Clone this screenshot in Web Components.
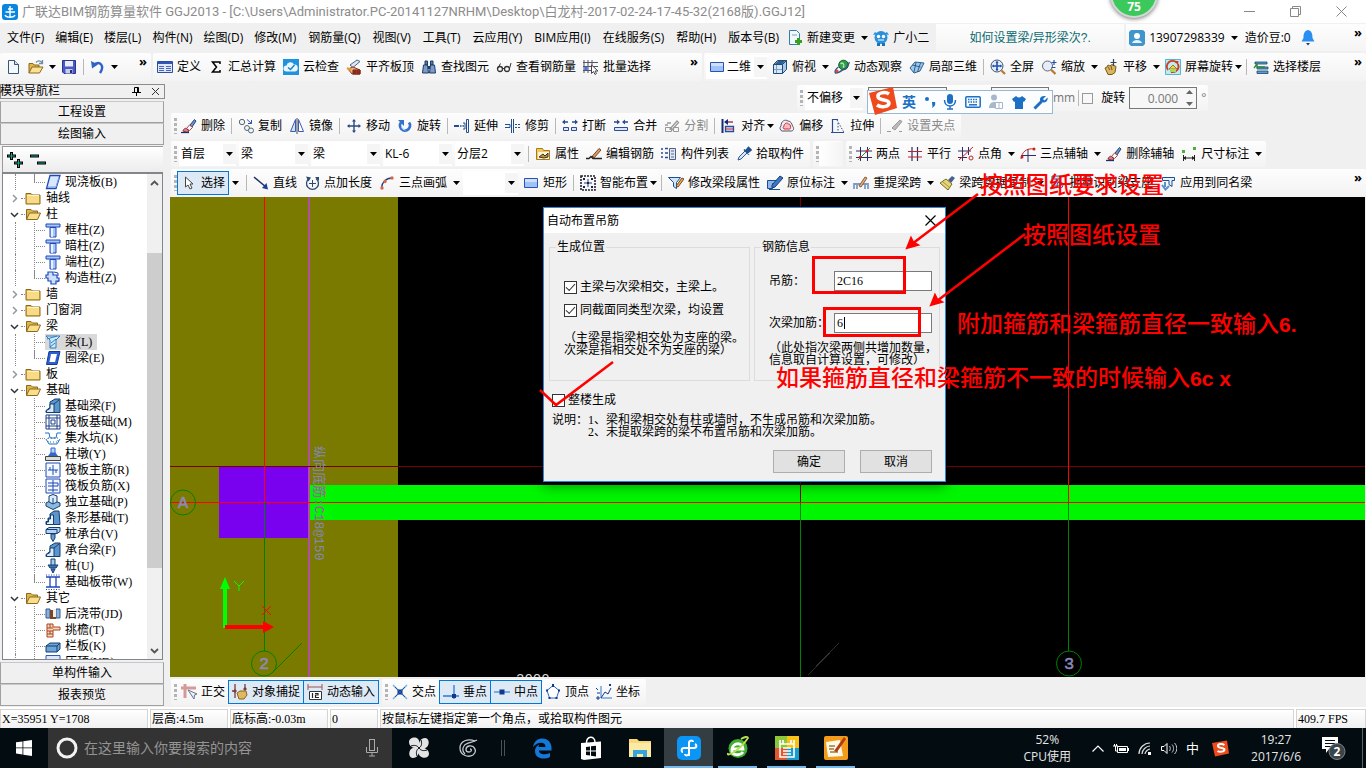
<!DOCTYPE html>
<html lang="zh-CN">
<head>
<meta charset="utf-8">
<title>广联达BIM钢筋算量软件 GGJ2013</title>
<style>
  body {
    margin: 0;
    background: #f0f0f0;
    color: #000;
    --ui: "Open Sans", "Noto Sans CJK SC", sans-serif;
    --song: "Liberation Serif", "Noto Sans CJK SC", serif;
    font: 12px/16px var(--ui);
  }
</style>
</head>
<body>
<ggj-app></ggj-app>
<script>
const svg = (body, size = 16) =>
  `<svg width="${size}" height="${size}" viewBox="0 0 16 16" fill="none" aria-hidden="true">${body}</svg>`;

const FOLDER = '<path d="M1 3.500h5l1.500 1.500h7.500v9h-14z" fill="#e9bd55" stroke="#8a6a1c"/><path d="M2 6h12v7H2z" fill="#f7db86"/><path d="M2 5.500h12" stroke="#fff3c4"/>';
const FOLDER_OPEN = '<path d="M1.500 13.500v-10h4.500l1.500 1.500h5v2" fill="#e2b44a" stroke="#8a6a1c"/><path d="M1.500 13.500l3-6.500h11l-3 6.500z" fill="#f9de8c" stroke="#8a6a1c"/>';
const ICONS = {
  file: '<path d="M3.500 1.500h6l4 4v9h-10z" fill="#f4f9ff" stroke="#3a5578"/><path d="M9.500 1.500v4h4" fill="#cfe0f2" stroke="#3a5578"/>',
  open: '<path d="M1 14V4.500h4l1 1.500h5v2" fill="#e2b44a" stroke="#8a6a1c"/><path d="M1 14l3-6h11l-3.500 6z" fill="#fbe194" stroke="#8a6a1c"/><path d="M8 3.500c2-2.500 5-2 6 .5M14.500 1v3.500h-3.500" stroke="#6b8fa8" stroke-width="1.300"/>',
  save: '<path d="M1.500 1.500h13v13H3l-1.500-1.500z" fill="#4a59c4" stroke="#2b3590"/><path d="M4 2h8v5.500H4z" fill="#e8ecfa"/><path d="M4.500 10h7v4.500h-7z" fill="#c9cfe8"/><path d="M9 11h2v3H9z" fill="#26307e"/>',
  undo: '<path d="M4 5.500c6-4 11 1 6 8.500" stroke="#2f62c8" stroke-width="2.400"/><path d="M1 2l1 7.500 6-4z" fill="#2f62c8"/>',
  define: '<path d="M.5 2.500h15v11H.5z" fill="#dfe8fb" stroke="#2d4f9e"/><path d="M1 3h14v2H1z" fill="#2f56b8"/><path d="M2 7.500h5M9 7.500h5M2 9.500h5M9 9.500h5M2 11.500h5M9 11.500h5" stroke="#4669b8"/>',
  sigma: '<path d="M12 5V3H4.500L8.500 8l-4 5H12v-2" stroke="#000" stroke-width="1.500"/>',
  cloud: '<path d="M0 0h16v16H0z" fill="#1f93de"/><path d="M3.500 12.500a3 3 0 010-6 4 4 0 017.500-1 3.500 3.500 0 01.5 7z" fill="#e9f6ff"/><path d="M5 8.500l2.500 2 4-4.500" stroke="#1580c8" stroke-width="1.400"/>',
  align: '<path d="M4 6l7-5 3 1.500-7 6z" fill="#dde7f2" stroke="#47648c"/><path d="M2 10l5-2 7 3v4H6z" fill="#e8b48a" stroke="#9c2f18"/><path d="M7 11h7v4H7zM9 11v4M12 11v4M7 13h7" fill="#c8502c" stroke="#702010"/><path d="M1 9l4 2" stroke="#e0a030" stroke-width="2"/>',
  find: '<path d="M4 2h2.500v4H4zM9.500 2H12v4H9.500z" fill="#587db0" stroke="#1d3b66"/><path d="M2.500 6h4l1 8h-6zM9.500 6h4l1 8h-6z" fill="#7c9cc8" stroke="#1d3b66"/><path d="M7 7h2v3H7z" fill="#1d3b66"/>',
  glasses: '<circle cx="4" cy="10" r="2.500" stroke="#333" stroke-width="1.300"/><circle cx="11" cy="10" r="2.500" stroke="#333" stroke-width="1.300"/><path d="M6.500 9.500h2M2 9l2.500-4.500M13.500 9.500L15 4" stroke="#333"/>',
  batch: '<path d="M1 1v13M5 1v13M9 1v13M0 3.500h15M0 7.500h15M0 11.500h9" stroke="#556"/><path d="M1.500 8h3v3h-3z" fill="#3d7be0"/><path d="M8.500 6v8.500l2-2 1.500 3 1.500-1-1.500-2.500h3z" fill="#fff" stroke="#445"/>',
  rect: '<path d="M1.500 3.500h13v9h-13z" fill="#9fc2fb" stroke="#2a52b0"/><path d="M2 4h12v3H2z" fill="#cfe0ff"/>',
  cube: '<path d="M1.500 5.500l4-4h9v9l-4 4h-9z" fill="#a7c9ea" stroke="#204a78"/><path d="M1.500 5.500h9v9M10.500 5.500l4-4" stroke="#204a78"/><path d="M2 6h8v8H2z" fill="#d5e8f8"/><path d="M4.500 6v8M2 10.500h8" stroke="#7aa0c4"/><path d="M3 5l3-3h7l-2.500 3z" fill="#2f6090"/>',
  orbit: '<circle cx="9.500" cy="6" r="4.800" fill="#2c9c4c" stroke="#14602c"/><path d="M6.500 5c2-2 4 0 3 2s2 2 3 0" stroke="#9fe6a0" stroke-width="1.500"/><path d="M15 3C16 6 6 14 1.500 14 0 12 3 9 4.500 8" stroke="#37577e" stroke-width="1.400"/><circle cx="3" cy="12" r="1.500" fill="#d44"/>',
  local3d: '<path d="M1 9l5-6 9 1-4 8-6 2z" fill="#9fc9e8" stroke="#2c5f90"/><path d="M3.500 6l8 2M7 3.500L5 13M11.500 4L8.500 13" stroke="#2c5f90"/>',
  full: '<circle cx="7" cy="7" r="6" fill="#e4eefa" stroke="#456"/><path d="M7 2.500v9M2.500 7h9" stroke="#2450b0" stroke-width="1.600"/><path d="M7 2l-1.500 2h3zM7 12l-1.500-2h3zM2 7l2-1.500v3zM12 7l-2-1.500v3z" fill="#2450b0"/><path d="M11.500 11.500l3.500 3.500" stroke="#b87828" stroke-width="2.200"/>',
  zoom: '<circle cx="6.500" cy="7" r="5" fill="#e4eefa" stroke="#667"/><path d="M13 1v5M10.500 3.500h5M10.500 8.500h4" stroke="#2450b0" stroke-width="1.200"/><path d="M10 10.500l4.500 4.500" stroke="#b87828" stroke-width="2.200"/>',
  pan: '<path d="M2 9l2-1 1-2 2 1 2-1.500 4 2-1 6-3 2H5z" fill="#dbb460" stroke="#7a5a18"/><path d="M10.500 0v7M7.500 3.500h6" stroke="#345" stroke-width="1.200"/><path d="M5 8l2 3M8 7l1 4" stroke="#7a5a18"/>',
  screenrot: '<path d="M.5.5h15v15H.5z" fill="#bfeaf2" stroke="#4fb8d8"/><path d="M3 11A5.500 5.500 0 0112 4M13 5c2 5-2 9-7 8" stroke="#d33a22" stroke-width="1.800"/><path d="M9.500 2l4 0-.5 4z" fill="#d33a22"/><path d="M4 10l4-4 4 4z" fill="#efd14e" stroke="#998020"/><path d="M5 10h6v3H5z" fill="#a6d66a"/>',
  floors: '<path d="M2 3h12v2H2zM4 8h11v2H4zM4 12h11v2.500H4z" fill="#5d9ec8" stroke="#14486e" stroke-width=".8"/><path d="M1 9l3-4v3h8" stroke="#2c8a3c" stroke-width="1.400"/>',
  brush: '<path d="M9 7l4.500-5.500 1.500 1.500-4 6z" fill="#6d92c8" stroke="#2c4678"/><path d="M5.500 10.500l3-3.500 3 2.500-3 3z" fill="#fff" stroke="#a44"/><path d="M2 13c1-3 3-3 3.500-2.500l2.500 2.500-2 1.500z" fill="#db7a88" stroke="#833"/><path d="M0 14.500h8" stroke="#1d2d70" stroke-width="1.300"/>',
  copy: '<circle cx="4" cy="4" r="2.700" fill="#f2f5f7" stroke="#567"/><circle cx="9" cy="10" r="2.500" fill="#f2f5f7" stroke="#567"/><circle cx="13" cy="12.500" r="2.500" fill="#f2f5f7" stroke="#567"/><path d="M9 1.500l4.500 4M13.500 2v3.500H10" stroke="#2b56b0"/>',
  mirror: '<path d="M6.500 1.500v12h-5z" stroke="#3c5ca8" fill="#cfe0fa"/><path d="M9.500 1.500v12h5z" stroke="#3c5ca8" fill="#fff"/><path d="M8 0v16" stroke="#446"/>',
  move: '<path d="M8 2v12M2 8h12" stroke="#2b4a80" stroke-width="1.400"/><path d="M8 1L6 3.500h4zM8 15l-2-2.500h4zM1 8l2.500-2v4zM15 8l-2.500-2v4z" fill="#2b4a80"/>',
  rotate: '<path d="M4 4.500a5 5 0 108 0" stroke="#3470cc" stroke-width="2.800"/><path d="M1 2h6v6z" fill="#3470cc"/><path d="M4.500 9a4 4 0 004 3" stroke="#b9d6ff"/>',
  extend: '<path d="M0 8h5" stroke="#204f90" stroke-width="2"/><path d="M6 8h5" stroke="#204f90" stroke-width="1.500" stroke-dasharray="1.500 1"/><path d="M9 5h2v6H9M12.500 1.500h2v13h-2z" stroke="#204f90"/>',
  trim: '<path d="M0 6.500h5v3H0" stroke="#204f90"/><path d="M6.500 1v14M8.500 1v14" stroke="#204f90"/><path d="M10 6.500h6M10 9.500h6" stroke="#204f90" stroke-dasharray="2 1"/>',
  break: '<path d="M1.500 9.500h5v3h-5zM9.500 9.500h5v3h-5z" fill="#dce6f8" stroke="#2d4a94"/><path d="M1 4h5M10 4h5" stroke="#2d4a94" stroke-width="1.300"/><path d="M0 4l3-2.500v5zM16 4l-3-2.500v5z" fill="#2d4a94"/>',
  join: '<path d="M1.500 9.500h13v3h-13z" fill="#dce6f8" stroke="#2d4a94"/><path d="M1 4h5M10 4h5" stroke="#2d4a94" stroke-width="1.300"/><path d="M7 4L4 1.500v5zM9 4l3-2.500v5z" fill="#2d4a94"/>',
  split: '<path d="M1.500 9.500h6v4h-6zM9.500 9.500h5v4h-5z" stroke="#999"/><path d="M6 11l7-8 1.500 1.500L8 12zM3 5h4M1 7h3" stroke="#999" stroke-width="1.300"/>',
  alignto: '<path d="M1.500 1v14" stroke="#142c70" stroke-width="2"/><path d="M4.500 8.500h8v5h-8z" fill="#dce6f8" stroke="#2d4a94" stroke-width="1.300"/><path d="M5 11h7" stroke="#c22"/><path d="M5 4h7" stroke="#a22a4a" stroke-width="1.400"/><path d="M3 4l4-3v6z" fill="#142c70"/>',
  offset: '<path d="M3 13a3 3 0 01-1-5C2 3 6 1 9 3c3 0 4 3 4.500 5 2 2 1 5-1 5z" stroke="#556" fill="#eef"/><path d="M5 11a2 2 0 010-3c0-2.500 3-4 4.500-2 2 0 2 2 2 3 .5 1 0 2-1 2z" stroke="#c33" fill="#fbb"/>',
  stretch: '<path d="M2.500 14.500v-13h5.500" stroke="#2d4a94" stroke-width="1.200"/><path d="M7 2l7 12.500" stroke="#2d4a94" stroke-dasharray="1.500 1.500"/><path d="M1 14.500h13" stroke="#2d4a94"/><path d="M8 5v9" stroke="#2d4a94" stroke-dasharray="1.500 1.500"/>',
  grip: '<path d="M0 13.500h4M12 13.500h3" stroke="#999"/><path d="M5 10l8-8 2 1.500L8 12z" fill="#bbb" stroke="#999"/>',
  prop: '<path d="M1.500 2.500h6l1 2h6v9h-13z" fill="#f2c661" stroke="#a87a1c"/><path d="M3 6h11v7H3z" fill="#fdf3d0"/><path d="M4 11l4-3 2 2 3-3v4l-4 1z" fill="#c8902c" stroke="#333"/>',
  editbar: '<path d="M0 12.500h3l2-2 2 2h9" stroke="#222" stroke-width="1.300"/><path d="M6 10.500l7-8 2 1.500-7 8z" fill="#d99c68" stroke="#7d4a24"/><path d="M5 12l1-2 2 1z" fill="#222"/>',
  list: '<path d="M0 3h2M0 7h2M0 11h2M4 2.500h3M4 7h3M4 11.500h3" stroke="#2d4a94" stroke-width="1.300"/><path d="M8.500 2.500h6v11h-6z" fill="#dfe7f4" stroke="#4a5f88"/><path d="M10 5h3M10 8h3M10 11h3" stroke="#667"/>',
  pick: '<path d="M2 14l1-3 6-6 2 2-6 6z" fill="#d8e8f8" stroke="#2f5a90"/><path d="M8 3.500l5 5M9.500 5l3-3.500 2.500 2.500-3.500 3z" fill="#23508e" stroke="#23508e" stroke-width="1.600"/>',
  twopt: '<path d="M4.500 1v14M11.500 1v14M0 5h16M0 11.500h16" stroke="#2b2f66"/><path d="M2 14L14 2" stroke="#2c8a2c"/><path d="M3 12l2-2M10 6l2-2" stroke="#c22" stroke-width="2"/>',
  parallel: '<path d="M5 1v14M10.500 1v14" stroke="#2b2f66" stroke-width="1.200"/><path d="M1 5.500h14M1 11h14" stroke="#b23"/>',
  ptangle: '<path d="M4.500 1v14M10.500 1v8M0 5h13M0 11.500h9" stroke="#2b2f66"/><path d="M1 14L15 1" stroke="#c22"/><circle cx="13" cy="12" r="2" stroke="#c22"/>',
  threept: '<path d="M8 3v13M1 9.500h15" stroke="#2b2f66"/><path d="M1 13C2 6 6 2 14 3" stroke="#c22"/><circle cx="14" cy="3" r="1.500" fill="#c22"/><circle cx="2" cy="11" r="1.500" fill="#c22"/>',
  dim: '<path d="M2.500 9v6M13.500 9v6M3 12h10" stroke="#222"/><path d="M2 12l3-2v4zM14 12l-3-2v4z" fill="#222"/><path d="M1 4h3v3H1zM12 1h3v3h-3z" fill="#4caf3c"/>',
  cursor: '<path d="M4.500 2v10l2.500-2 2 4 2-1-2-4h3z" fill="#fff" stroke="#444"/>',
  line: '<path d="M1 2l12 10" stroke="#1c2d66" stroke-width="1.500"/><path d="M15 14.500l-6-1.500 4.500-5z" fill="#1c3d96"/>',
  ptlen: '<path d="M5 3.500a6 6 0 107 0" stroke="#2b4a70" stroke-width="1.300"/><path d="M8.500 5v7M5 8.500h7" stroke="#2b4a70"/><path d="M2 1.500l5 1-2.500 4zM15 6l-4-4h4z" fill="#2b4a70"/>',
  arc: '<path d="M2.500 13C3 7 7 3 13 3" stroke="#24407e" stroke-width="1.300"/><circle cx="3" cy="13" r="1.700" fill="#d4684c"/><circle cx="6" cy="6.500" r="1.700" fill="#d4684c"/><circle cx="13" cy="3" r="1.700" fill="#d4684c"/>',
  smart: '<path d="M1 1h14v14H1z" stroke="#223" stroke-dasharray="2 1" stroke-width="1.600"/><path d="M8 4v8M4 8h8" stroke="#1c3d96"/><path d="M3 3h2v2H3zM11 3h2v2h-2zM3 11h2v2H3zM11 11h2v2h-2zM7 7h2v2H7z" fill="#223"/>',
  modify: '<path d="M.5 2.500h12l-4 5v6l-3-2v-4z" fill="#cfe6f8" stroke="#1d4f90"/><path d="M8 11l6-8 2 1-6 8z" fill="#e8a860" stroke="#7c4818"/>',
  insitu: '<path d="M.5 5.500h9v3h-4v5h-5z" fill="#8fb8e8" stroke="#1d4f90"/><path d="M5 10l8-9 3 2-8 9-3 1z" fill="#3d78c4" stroke="#173e78"/><path d="M2 14.500h11" stroke="#1d4f90"/>',
  respan: '<path d="M1 14v-5h3v5M12 14v-5h3v5M1 9h14" stroke="#7d9cc4" stroke-width="1.800"/><path d="M6 11l6-9 2 1-6 9z" fill="#e0b088" stroke="#8a5a34"/>',
  paint: '<path d="M9 5l4-4 3 2-4 5z" fill="#47608e"/><path d="M1 8l6-4 6 5-4 6z" fill="#e6d478" stroke="#7c6a20"/><path d="M4 7l6 5" stroke="#a89838"/>',
  identify: '<path d="M3 1h9v10H3z" fill="#cfe0f2" stroke="#335a90"/><path d="M5 4h5M5 7h5" stroke="#335a90"/><circle cx="11" cy="10" r="3" stroke="#335a90"/>',
  apply: '<path d="M2.500 2.500h12v3H12v6l-3-2V5.500H2.500z" fill="#e8f1fa" stroke="#1d4f90"/><path d="M5 7v5M2 10l3.500 4.500L9 11" stroke="#5a8fd0" stroke-width="2"/>',
  ortho: '<path d="M0 4h15M4 0v14" stroke="#d49a9a" stroke-width="3"/><path d="M7 6l6 9 .5-4 2.500-1z" fill="#eef" stroke="#678"/>',
  snap: '<path d="M3 0v14M13 0v6M0 7h3" stroke="#7a3c3c" stroke-width="1.300"/><path d="M5 9l3-2 6 0 1 4-3 4H7z" fill="#e0b860" stroke="#8a6420"/><path d="M1 7l2-2 2 2-2 2zM11 5l2-2 2 2-2 2z" fill="#7a3c3c"/>',
  dyn: '<path d="M1 0v6M15 0v6M1 3h14" stroke="#a05050"/><path d="M2.500 7.500h12v8h-12z" fill="#fff" stroke="#333"/><path d="M5.500 9v5M8 9.500h3V11H8.500v2.500H12" stroke="#222" stroke-width="1.200"/>',
  cross: '<path d="M1 1l14 14M15 1L1 15" stroke="#7fb0dc" stroke-width="1.500"/><path d="M5.500 5.500h5v5h-5z" fill="#10388c"/><path d="M3 3l10 10M13 3L3 13" stroke="#2860b0"/>',
  perp: '<path d="M0 12h16M11 1v14" stroke="#2d78d0" stroke-width="1.300"/><path d="M9 10h4v4H9z" fill="#10388c"/>',
  mid: '<path d="M0 8h16" stroke="#5b96d8" stroke-width="1.500"/><path d="M5.500 5.500h5v5h-5z" fill="#10388c"/>',
  vertex: '<path d="M8 1.500l6 5-2.500 7.500h-7L2 6.500z" stroke="#2d6cc0" fill="#fff"/><path d="M7 0h2v3H7zM13 5.500h2v2h-2zM1 5.500h2v2H1zM3.500 13h2v2h-2zM10.500 13h2v2h-2z" fill="#10388c"/>',
  coord: '<path d="M5 2v12h11" stroke="#2d78d0"/><path d="M5 14l4-6 3 2 3-6" stroke="#10388c"/><path d="M0 4l2 2M1 9h3M13 0l2 2M15 0l-2 2M1 13h2v2H1z" stroke="#10388c"/>',
  change: '<path d="M2.500.5h7l3 3v11h-10z" fill="#f2f8ff" stroke="#3a78a8"/><path d="M5 5h5" stroke="#7aa"/><path d="M11.500 8v7M8 11.500h7" stroke="#35a024" stroke-width="3"/>',
  robot: '<circle cx="8" cy="7.500" r="6.500" fill="#2b90dc"/><path d="M0 5l2-3 3 2M16 5l-2-3-3 2" fill="#2b90dc"/><circle cx="5.500" cy="6.500" r="1.700" fill="#fff"/><circle cx="10.500" cy="6.500" r="1.700" fill="#fff"/><path d="M5 10h6" stroke="#fff"/><path d="M4 13h3v3H4zM9 13h3v3H9z" fill="#1c70b8"/>',
  user: '<path d="M2 0h12l2 2v12l-2 2H2l-2-2V2z" fill="#3f95cc"/><circle cx="8" cy="6" r="3" fill="#fff"/><path d="M3 13c1-4 9-4 10 0z" fill="#e6f3fb"/>',
  bell: '<path d="M8 0c4 1 4.500 4 4.500 8l2 3.500h-13l2-3.500C3.500 4 4 1 8 0z" fill="#2b8ff0"/><path d="M6 13h4l-2 2.500z" fill="#1a3c70"/>',
  folder: FOLDER,
  folderopen: FOLDER_OPEN,
  slab: '<path d="M5 1.500h10L11 14.500H1.500z" fill="#d8e8ff" stroke="#1f48b8" stroke-width="1.300"/><path d="M3 13h8l3-10" stroke="#7ca4ee"/>',
  column: '<path d="M1 2h14v3H1zM5 5.500h6V15H5z" fill="#a9c6fa" stroke="#1f48b8"/><path d="M7 6v9" stroke="#fff" stroke-width="1.500"/>',
  ccol: '<path d="M3 2h5v3h4v3h2v3h-3v3H6v-3H3V8H1V5h2z" fill="#cfe0ff" stroke="#1f48b8" stroke-width="1.200"/><path d="M9 2l4 1v3M12 12l2-1" stroke="#1f48b8"/>',
  beam: '<path d="M1 2h14l-4 4v8H5V6z" fill="#cfe8fa" stroke="#2a7cc0"/><path d="M2 5l10-3M6 9l5-4M5 13l5-4" stroke="#2a7cc0"/>',
  ring: '<path d="M4 1.500h11L12 14.500H1.500z" fill="#2d5fd0" stroke="#153a98"/><path d="M6 4h6l-2 8H4.500z" fill="#fff"/>',
  fbeam: '<path d="M1 14.500v-2l4-3V4l5-3h5v13.500z" fill="#5c94cc" stroke="#123f70"/><path d="M1.500 14.500v-2l3.500-2V6h4v8.500z" fill="#d8e9f8" stroke="#123f70"/><path d="M9 6l5-4" stroke="#123f70"/>',
  raft: '<path d="M1 1h14v14H1zM4 1v14M12 1v14M1 4h14M1 12h14M6 6h4v4H6z" stroke="#1c3f88"/>',
  pit: '<path d="M0 3h4l1 5h6l1-5h4M1 9l3 5h8l3-5" stroke="#2470c8"/><path d="M3 8h10v4H3z" stroke="#2470c8" stroke-dasharray="1 2"/>',
  pier: '<path d="M.5 10.500h15v4H.5z" fill="#ddd" stroke="#444"/><path d="M3 10l3-4h4l3 4z" fill="#3168c8"/><path d="M6 2h4v5H6z" fill="#bcd2f6" stroke="#3168c8"/>',
  rmain: '<path d="M1 1h14v14H1z" fill="#f4f8ff" stroke="#1f48b8"/><path d="M8 3v10M3 8h10M5 5v3M11 8v3" stroke="#1f48b8"/>',
  rneg: '<path d="M1 1h14v14H1z" fill="#f4f8ff" stroke="#1f48b8"/><path d="M8 2v12M3 5h10v3M3 12h10M3 8h10" stroke="#1f48b8"/>',
  iso: '<path d="M1 9l6-3 8 3v3l-7 3.500L1 12z" fill="#8db8e0" stroke="#123f70"/><path d="M4 2l4-1.500L12 2v6L8 10 4 8z" fill="#dcecfa" stroke="#123f70"/><path d="M8 4v6" stroke="#123f70"/>',
  strip: '<path d="M1 14.500v-3h2V8h2V4l4-3h5l1 13.500z" fill="#5c94cc" stroke="#123f70"/><path d="M1.500 14.500v-2.500h2V9h2V5h3v9.500z" fill="#e6f0fa" stroke="#123f70"/>',
  cap: '<path d="M1 3.500l3-2h11v4l-3 2H1z" fill="#b5d2f0" stroke="#123f70"/><path d="M6 8h4v4l-2 3.500L6 12z" fill="#6d9cd0" stroke="#123f70"/><path d="M1 3.500h11v4" stroke="#123f70"/>',
  pile: '<path d="M6 1h4v7H6z" fill="#a8c8ee" stroke="#123f70"/><path d="M3 7h10l-2 3H5zM6 11h4l-2 4z" fill="#3d74b8" stroke="#123f70"/>',
  band: '<path d="M1 3h14M1 13h14M5 3v10M11 3v10" stroke="#1f48b8" stroke-width="1.300"/><path d="M1 15.500h14M1 1h14" stroke="#1f48b8" stroke-dasharray="1 1.500"/>',
  post: '<path d="M1 3h4v9H1zM11 3h4v9h-4z" fill="#8fb0d8" stroke="#35588c"/><path d="M5 4h6v9H5z" fill="#7c4420"/><path d="M8 3h3v8H8z" fill="#eee"/>',
  eave: '<path d="M2 2h6v3h7v3H8v7H2zM2 6h6M2 9h6M2 12h6M5 2v4M5 9v3" fill="#f6d6c0" stroke="#a8441c"/>',
  rail: '<path d="M1 8l4-3h10v6l-3 3H1z" fill="#6fa4d8" stroke="#123f70"/><path d="M1 8h11v6M12 8l3-3" stroke="#123f70"/>',
  mask: '<path d="M1 1.500h14v13H1z" fill="#dbe8fc" stroke="#2c58c0"/>'
};
const ARROW = '<svg class="arrow" width="7" height="4" viewBox="0 0 7 4" aria-hidden="true"><path d="M0 0h7L3.500 4z" fill="#000"/></svg>';

function define(tag, css, markup, setup) {
  customElements.define(tag, class extends HTMLElement {
    constructor() {
      super();
      this.attachShadow({ mode: 'open' });
    }
    connectedCallback() {
      const body = typeof markup === 'function' ? markup(this) : markup;
      const t = document.createElement('template');
      t.innerHTML = `<style>*{box-sizing:border-box}${css}</style>${body}`;
      this.shadowRoot.replaceChildren(t.content.cloneNode(true));
      if (setup) setup(this, this.shadowRoot);
    }
  });
}

/* ---- small parts ---- */
define('g-icon', ':host{display:inline-flex;width:16px;height:16px;flex:none}', el => svg(ICONS[el.getAttribute('name')] || ''));

define('tool-button', `
  :host{display:block;flex:none}
  button{display:flex;align-items:center;gap:4px;height:24px;margin:0 -4px;padding:0 3px;border:1px solid transparent;background:none;font:inherit;color:inherit;white-space:nowrap}
  :host([on]) button{background:#dde9f5;border-color:#0078d7}
  :host([disabled]) button{color:#8a8a8a}
  :host([drop]) button{margin-right:-3px;padding-right:0}
  .arrow{margin-left:2px}
  :host([drop=tight]) .arrow{margin-left:-2px}
  :host([drop=icon]) .arrow{margin-left:1px}
`, el => `<button ${el.hasAttribute('disabled') ? 'disabled' : ''} aria-label="${el.textContent || el.getAttribute('icon')}">
  <g-icon name="${el.getAttribute('icon')}"></g-icon>${el.textContent ? '<span><slot></slot></span>' : ''}${el.hasAttribute('drop') ? ARROW : ''}</button>`);

define('drop-arrow', ':host{display:flex;flex:none;width:5px;margin-right:3px}button{padding:0;border:0;background:none;display:flex}', `<button aria-label="更多">${ARROW}</button>`);

define('tool-combo', `
  :host{display:grid;grid-template-columns:1fr 12px;align-items:center;flex:none;height:24px;margin:0 -2px;background:#fff;width:69px}
  g-icon{grid-area:1/1;margin-left:3px}
  select{grid-area:1/1/2/3;appearance:none;border:0;background:none;font:inherit;color:#000;padding:0 0 0 2px;width:100%;height:24px}
  :host([icon]) select{padding-left:21px}
  .arrow{grid-area:1/2;pointer-events:none;margin-left:2px}
  i{grid-area:1/2;background:#f5f5f5;height:20px;margin:0 0 0 -1px}
`, el => `<i></i>${el.hasAttribute('icon') ? `<g-icon name="${el.getAttribute('icon')}"></g-icon>` : ''}
  <select aria-label="${el.getAttribute('name')}"><option>${el.getAttribute('value') || ''}</option></select>${ARROW}`);

define('tool-sep', ':host{flex:none;width:1px;height:16px;margin:0 -1px;background:#b8b8b8}', '');
define('tool-grip', ':host{flex:none;width:3px;height:16px;margin-right:-3px;background:repeating-linear-gradient(#b4b4b4 0 3px,transparent 3px 5px)}', '');
define('tool-more', ':host{align-self:flex-start;margin:-1px 0 0 auto;padding-right:4px}button{border:0;background:none;padding:0;display:flex;font:bold 13px/18px var(--ui)}', '<button aria-label="更多工具">»</button>');

define('tool-strip', `
  :host{display:flex;align-items:center;gap:7px;flex:none;height:26px;padding:0 6px 0 3px;background:linear-gradient(#fdfdfd,#f3f3f3);border-radius:2px;min-width:0}
  :host([grow]){flex:1;padding-right:0}
`, '<slot></slot>');
define('tool-row', ':host{display:flex;align-items:center;gap:3px;height:28px;min-width:0;overflow:hidden}', '<slot></slot>');

/* ---- title bar ---- */
define('title-bar', `
  :host{display:flex;align-items:center;gap:4px;height:23px;padding:0 19px 0 2px;background:#fff;color:#8c8c8c}
  h1{margin:0;font:13px/16px Roboto,"Noto Sans CJK SC",sans-serif;flex:1;white-space:nowrap}
  div{display:flex;gap:35px}
  button{border:0;padding:0;background:none;display:flex;width:11px;height:11px}
`, `
  ${svg('<rect width="16" height="16" rx="3" fill="#0b86e0"/><path d="M8 2v12M8 8h5M8 8H3.500M6 5h5M3 11c1 2.500 5 2.500 5 1.500M13 11c-1 2.500-5 2.500-5 1" stroke="#fff" stroke-width="1.400"/>')}
  <h1>广联达BIM钢筋算量软件 GGJ2013 - [C:\\Users\\Administrator.PC-20141127NRHM\\Desktop\\白龙村-2017-02-24-17-45-32(2168版).GGJ12]</h1>
  <div>
    <button aria-label="最小化"><svg width="11" height="11" fill="none"><path d="M0 5.500h11" stroke="#888"/></svg></button>
    <button aria-label="还原"><svg width="11" height="11" fill="none"><path d="M.5 2.500h8v8h-8zM2.500 2.500v-2h8v8h-2" stroke="#888"/></svg></button>
    <button aria-label="关闭"><svg width="11" height="11" fill="none"><path d="M.5.5l10 10M10.500.5l-10 10" stroke="#888"/></svg></button>
  </div>`);

/* ---- menu bar ---- */
define('menu-bar', `
  :host{display:flex;align-items:center;height:29px}
  nav{display:flex;gap:11px;padding-left:7px}
  nav button{border:0;background:none;padding:0;font:inherit;white-space:nowrap}
  nav button:nth-child(n+7){padding-left:1px}
  .extra{display:flex;gap:7px;padding:0 7px 0 8px}
  .tip{flex:0 0 188px;height:27px;display:grid;place-items:center;background:linear-gradient(#fdfdfd,#f5f5f5)}
  a{color:#0a6a70;text-decoration:none;font:12px/16px "Liberation Sans","Noto Sans CJK SC",sans-serif}
  .user{flex:1;height:27px;margin-left:2px;display:flex;align-items:center;gap:9px;padding-left:3px;background:linear-gradient(#fdfdfd,#f5f5f5)}
`, `
  <nav>${['文件(F)','编辑(E)','楼层(L)','构件(N)','绘图(D)','修改(M)','钢筋量(Q)','视图(V)','工具(T)','云应用(Y)','BIM应用(I)','在线服务(S)','帮助(H)','版本号(B)'].map(t => `<button>${t}</button>`).join('')}</nav>
  <div class="extra"><tool-button icon="change" drop>新建变更</tool-button><tool-button icon="robot">广小二</tool-button></div>
  <div class="tip"><a href="#tip">如何设置梁/异形梁次?.</a></div>
  <div class="user"><tool-button icon="user" drop>13907298339</tool-button><span>造价豆:0</span><g-icon name="bell"></g-icon><tool-more></tool-more></div>`);

/* ---- navigation panel ---- */
const TREE = [
  ['c', 'slab', '现浇板(B)', 'last'], ['f', 0, '轴线'], ['f', 1, '柱'],
  ['c', 'column', '框柱(Z)'], ['c', 'column', '暗柱(Z)'], ['c', 'column', '端柱(Z)'], ['c', 'ccol', '构造柱(Z)', 'last'],
  ['f', 0, '墙'], ['f', 0, '门窗洞'], ['f', 1, '梁'], ['c', 'beam', '梁(L)', 'sel'], ['c', 'ring', '圈梁(E)', 'last'],
  ['f', 0, '板'], ['f', 1, '基础'],
  ['c', 'fbeam', '基础梁(F)'], ['c', 'raft', '筏板基础(M)'], ['c', 'pit', '集水坑(K)'], ['c', 'pier', '柱墩(Y)'],
  ['c', 'rmain', '筏板主筋(R)'], ['c', 'rneg', '筏板负筋(X)'], ['c', 'iso', '独立基础(P)'], ['c', 'strip', '条形基础(T)'],
  ['c', 'cap', '桩承台(V)'], ['c', 'fbeam', '承台梁(F)'], ['c', 'pile', '桩(U)'], ['c', 'band', '基础板带(W)', 'last'],
  ['f', 1, '其它'], ['c', 'post', '后浇带(JD)'], ['c', 'eave', '挑檐(T)'], ['c', 'rail', '栏板(K)'], ['c', 'mask', '压顶(YD)']
];
const treeRow = ([kind, a, text, mark = '']) => kind === 'f'
  ? `<li class="folder"><svg class="chev" width="9" height="9" fill="none"><path d="${a ? 'M1 3l3.500 3.500L8 3' : 'M3 1l3.500 3.500L3 8'}" stroke="${a ? '#333' : '#999'}" stroke-width="1.500"/></svg><i></i><g-icon name="${a ? 'folderopen' : 'folder'}"></g-icon><span>${text}</span></li>`
  : `<li class="leaf ${mark}"><i class="rail"></i><i class="twig"></i><b><g-icon name="${a}"></g-icon><span>${text}</span></b></li>`;

define('tree-view', `
  :host{display:flex;font:12px/16px var(--song);background:#fff;border:1px solid #82868c;border-top-width:2px;overflow:hidden}
  ul{list-style:none;margin:0;padding:0;flex:1;min-width:0;overflow:hidden}
  li{display:flex;height:16px;align-items:center;white-space:nowrap}
  .folder{padding-left:7px}
  .chev{flex:none}
  .folder i{width:4px;border-top:1px dotted #888;margin:0 0 0 2px}
  .folder span{margin-left:5px}
  .rail{flex:none;width:19px;height:16px;margin-left:12px;border-left:1px dotted #888}
  .twig{flex:none;width:11px;height:16px;background:linear-gradient(90deg,#888 50%,transparent 50%) 0 8px/2px 1px repeat-x,linear-gradient(#888 50%,transparent 50%) 0 0/1px 2px repeat-y}
  .last .twig{background:linear-gradient(90deg,#888 50%,transparent 50%) 0 8px/2px 1px repeat-x,linear-gradient(#888,#888) 0 0/1px 8px no-repeat}
  b{display:flex;gap:4px;font-weight:normal;padding-right:5px}
  .sel b{background:#d9d9d9}
  .bar{flex:none;width:15px;background:#f0f0f0;display:grid;grid-template-rows:17px 62px 315px 1fr 17px;justify-items:center;align-items:center}
  .bar u{grid-row:3;align-self:stretch;justify-self:stretch;background:#cdcdcd}
  .bar svg:last-child{grid-row:5}
`, `<ul>${TREE.map(treeRow).join('')}</ul>
  <div class="bar"><svg width="9" height="6" fill="none"><path d="M1 5l3.500-3.500L8 5" stroke="#555" stroke-width="1.800"/></svg><u></u><svg width="9" height="6" fill="none"><path d="M1 1l3.500 3.500L8 1" stroke="#555" stroke-width="1.800"/></svg></div>`);

define('nav-panel', `
  :host{display:flex;flex-direction:column;font:12px/16px var(--song)}
  header{display:flex;align-items:center;gap:10px;height:15px;border:1px solid #8c8c8c;padding-right:4px;margin-bottom:2px}
  h2{font:12px/13px var(--song);margin:0 auto 0 -1px}
  .tab{flex:none;height:22px;border:1px solid #a0a0a0;border-top-color:#c8c8c8;background:#f0f0f0;font:inherit;padding:0;margin-right:1px}
  .tools{flex:none;height:26px;display:flex;align-items:center;margin:1px 2px 0;padding-left:4px;border:solid #9a9a9a;border-width:1px 0 0 1px;background:linear-gradient(#fff,#ececec)}
  tree-view{flex:1 1 0;min-height:300px;margin:0 2px 2px}
`, `
  <header><h2>模块导航栏</h2>
    <svg width="9" height="9" fill="none"><path d="M2.500 5.500v-5h4v5M0 5.500h9M4.500 5.500V9M5.500.5v5" stroke="#000"/></svg>
    <svg width="9" height="9" fill="none"><path d="M1 1l7 7M8 1L1 8" stroke="#333"/></svg></header>
  <button class="tab">工程设置</button><button class="tab">绘图输入</button>
  <div class="tools"><svg width="42" height="16" fill="none"><path d="M0 4h9M4.500 0v8M7 11h9M11.500 7v9M23 4h9M30 11h9" stroke="#000" stroke-width="3"/><path d="M1 4h7M4.500 1v6M8 11h7M11.500 8v7M24 4h7M31 11h7" stroke="#18a090"/></svg></div>
  <tree-view></tree-view>
  <button class="tab">单构件输入</button><button class="tab">报表预览</button>`);

/* ---- drawing area: a free canvas of beams, axes and labels ---- */
define('cad-canvas', `
  :host{display:block;position:relative;background:#000;overflow:hidden}
  .draw{display:block;position:absolute;inset:0;width:100%;height:100%}
  text{font-family:"Liberation Mono","Noto Sans CJK SC",monospace}
`, `
  <svg class="draw" fill="none" shape-rendering="crispEdges">
    <rect width="228" height="100%" fill="#7a7a00"/>
    <rect x="139" y="288" width="100%" height="35" fill="#00f500"/>
    <rect x="49" y="270" width="90" height="71" fill="#7a00f0"/>
    <path d="M139 0v480" stroke="#b050a0" stroke-width="2"/>
    <rect y="269" width="100%" height="1" fill="#780000"/>
    <rect x="0" y="305" width="100%" height="1" fill="#f00"/>
    <path d="M94.500 0v305M898.500 0v305" stroke="#f00"/>
    <path d="M630.500 0v305" stroke="#780000"/>
    <path d="M94.500 305v149M898.500 306v148M630.500 306v174" stroke="#008000"/>
    <path d="M102 476l30-30" stroke="#008000"/><path d="M638 478l31-32" stroke="#2a302a"/>
    <g stroke="#008000" shape-rendering="auto"><circle cx="13" cy="305.500" r="12.500"/><circle cx="94" cy="466.500" r="12.500"/><circle cx="899" cy="466.500" r="12.500"/></g>
    <g font-size="17" text-anchor="middle" fill="#8a8ab8" stroke="#8a8ab8" stroke-width=".5"><text x="13" y="311">A</text><text x="94" y="472">2</text><text x="899" y="472">3</text></g>
    <text transform="translate(145 249) rotate(90)" font-size="13" fill="#8488b8">纵向底<tspan fill="#b050b0">筋:C1</tspan>8@150</text>
    <text x="346" y="487" font-size="14" fill="#d8d8d8">3000</text>
    <g shape-rendering="auto"><path d="M53 431h4v-39h3l-5-12-5 12h3z" fill="#0f0"/><path d="M55 428h38v-4l11 6-11 6v-4H55z" fill="#f00"/>
    <path d="M64 384l5 5 5-5M69 389v5" stroke="#0f0"/><path d="M92 409l9 9M101 409l-9 9" stroke="#f00"/></g>
  </svg><slot></slot>`);

/* ---- dialog ---- */
define('group-box', `
  :host{display:block}
  fieldset{margin:0;border:1px solid #dcdcdc;min-width:0;height:100%;padding:0 0 0 14px}
  legend{padding:0 1px;margin-left:-8px;line-height:16px}
`, el => `<fieldset><legend>${el.getAttribute('label')}</legend><slot></slot></fieldset>`);

define('check-item', `
  :host{display:block}
  label{display:flex;align-items:center;gap:3px;height:16px}
  span{white-space:nowrap}
  input{appearance:none;flex:none;width:13px;height:13px;margin:0;border:1px solid #333;background:#fff;display:grid;place-items:center}
  input:checked::after{content:"";width:8px;height:4px;border:solid #333;border-width:0 0 1px 1px;transform:rotate(-48deg) translate(1px,-1px)}
`, el => `<label><input type="checkbox" ${el.hasAttribute('checked') ? 'checked' : ''}><span><slot></slot></span></label>`);

define('hanger-dialog', `
  :host{display:flex;flex-direction:column;width:403px;background:#f0f0f0;border:1px solid #2d88dc;font:12px/12px var(--song);box-shadow:0 4px 12px #0006}
  header{display:flex;align-items:center;justify-content:space-between;height:25px;padding:0 9px 0 3px;background:#fff}
  h2{margin:0;font:12px/16px var(--ui)}
  header button{border:0;background:none;padding:0;display:flex}
  .groups{display:grid;grid-template-columns:201px 186px;gap:4px;padding:6px 5px 0;height:148px}
  check-item{margin-bottom:7px}
  .first{padding-top:24px}
  p{margin:0;white-space:nowrap}
  .first p{padding-top:7px}
  .field{display:grid;grid-template-columns:65px 98px;align-items:center;height:20px}
  .field input{height:20px;width:98px;border:1px solid #7a7a7a;padding:0 2px;font:inherit;border-radius:0;background:#fff}
  .rebar{padding-top:16px;display:grid;gap:22px}
  .caret{position:relative}
  .caret::after{content:"";position:absolute;left:75px;top:4px;width:1px;height:12px;background:#000}
  .rebar p{margin-top:-13px}
  .all{padding:11px 0 0 8px}
  .all check-item{margin-bottom:6px}
  .desc{display:grid;grid-template-columns:36px 1fr}
  footer{display:flex;gap:15px;justify-content:flex-end;padding:12px 13px 8px 0}
  footer button{width:72px;height:23px;padding:0;border:1px solid #adadad;background:#e1e1e1;font:12px/16px var(--song)}
`, `
  <header><h2>自动布置吊筋</h2><button aria-label="关闭"><svg width="11" height="11" fill="none"><path d="M.5.5l10 10M10.500.5l-10 10" stroke="#000" stroke-width="1.200"/></svg></button></header>
  <div class="groups">
    <group-box label="生成位置"><div class="first">
      <check-item checked>主梁与次梁相交，主梁上。</check-item><check-item checked>同截面同类型次梁，均设置</check-item>
      <p>（主梁是指梁相交处为支座的梁。<br>次梁是指相交处不为支座的梁）</p></div></group-box>
    <group-box label="钢筋信息"><div class="rebar">
      <div class="field"><label for="hang">吊筋：</label><input id="hang" value="2C16"></div>
      <div class="field caret"><label for="extra">次梁加筋：</label><input id="extra" value="6"></div>
      <p>（此处指次梁两侧共增加数量，<br>信息取自计算设置，可修改）</p></div></group-box>
  </div>
  <div class="all"><check-item>整楼生成</check-item>
    <p class="desc"><span>说明：</span><span>1、梁和梁相交处有柱或墙时，不生成吊筋和次梁加筋。<br>2、未提取梁跨的梁不布置吊筋和次梁加筋。</span></p></div>
  <footer><button>确定</button><button>取消</button></footer>`);

/* ---- input-method bar ---- */
define('ime-bar', `
  :host{display:flex;align-items:center;justify-content:space-between;padding:0 4px 0 34px;background:#fcfdff;border:1px solid #9ab8d0;color:#1b70c4;font:bold 14px/18px var(--ui)}
  .s{position:absolute;left:0;top:-5px}
`, `
  <svg class="s" width="30" height="29" viewBox="0 0 30 29" fill="none"><path d="M1 7l24-6 4 21-22 7z" fill="#ee4a1c"/><path d="M21 8c-4-3-12-1-11 3s11 2 11 6-8 5-12 2" stroke="#fff" stroke-width="3.500"/></svg>
  <span>英</span>
  <svg width="12" height="12" fill="#1b70c4"><circle cx="3" cy="3" r="2"/><path d="M8 6h3c1 3-1 5-3 6 1-2 0-3 0-6z"/></svg>
  <svg width="14" height="16" fill="none"><rect x="4" width="6" height="10" rx="3" fill="#1b70c4"/><path d="M1.500 6c0 8 11 8 11 0M7 12v3M4 15h6" stroke="#1b70c4" stroke-width="1.500"/></svg>
  <svg width="16" height="12" fill="none"><rect x=".8" y=".8" width="14.400" height="10.400" rx="1" stroke="#1b70c4" stroke-width="1.500"/><path d="M3 3.500h10M3 6h10" stroke="#1b70c4" stroke-width="1.500" stroke-dasharray="1.500 1"/><path d="M4 8.800h8" stroke="#1b70c4" stroke-width="1.500"/></svg>
  <svg width="16" height="16" fill="none"><circle cx="6" cy="3.500" r="3" fill="#a8b8cc"/><path d="M1 14c0-8 10-8 10 0z" fill="#a8b8cc"/><path d="M7.500 8.500h7v6h-7zM11 8.500v6" fill="#fff" stroke="#a8b8cc"/></svg>
  <svg width="14" height="13"><path d="M4 0c2 2 4 2 6 0l4 3-2 3-1-.5V13H3V5.500L2 6 0 3z" fill="#1b70c4"/></svg>
  <svg width="15" height="15" fill="none"><path d="M1.500 13.500l7-7" stroke="#1b70c4" stroke-width="3"/><path d="M13 1l-3 3 1.500 1.500 3-3c1 4-3 6-6 4.500S6.500 0 13 1z" fill="#1b70c4"/></svg>`);

/* ---- right side tool rows ---- */
define('offset-fields', `
  :host{display:flex;align-items:center;gap:4px;color:#777}
  input[type=text]{height:22px;border:1px solid #777;background:#f7f7f7;padding:0;font:12px/16px var(--ui);color:#777;text-align:right}
  .a{width:79px}.b{width:58px;margin-left:40px}
  .spin{display:flex;position:relative;height:22px;width:68px}
  .spin input{width:100%;padding-right:18px}
  .spin svg{position:absolute;right:4px;top:3px}
  label{color:#000;display:flex;align-items:center;gap:8px}
  label input{appearance:none;width:11px;height:11px;border:1px solid #999;margin:0;background:#f8f8f8}
`, `<input type="text" class="a" aria-label="X 偏移"><input type="text" class="b" aria-label="Y 偏移"><span>mm</span>
  <tool-sep></tool-sep><label><input type="checkbox">旋转</label>
  <span class="spin"><input type="text" value="0.000" aria-label="旋转角度"><svg width="7" height="16"><path d="M0 4l3.500-4L7 4zM0 12l3.500 4L7 12z" fill="#666"/></svg></span><span>°</span>`);

define('status-bar', `
  :host{display:flex;gap:2px;height:21px;padding-top:2px;background:#fff;font:12px/18px var(--song)}
  span{flex:none;border:1px solid #d4d4d4;border-bottom:0;background:linear-gradient(#fff,#f0f0f0);padding-left:1px;white-space:nowrap}
`, `<span style="width:148px">X=35951 Y=1708</span><span style="width:78px">层高:4.5m</span><span style="width:98px">底标高:-0.03m</span><span style="width:48px">0</span><span style="flex:1">按鼠标左键指定第一个角点，或拾取构件图元</span><span style="width:70px">409.7 FPS</span>`);

/* ---- taskbar ---- */
define('task-bar', `
  :host{display:flex;height:40px;background:#020c11;color:#e6e6e6}
  button{flex:none;width:49px;border:0;padding:0;background:none;display:grid;place-items:center;position:relative}
  .start{width:48px}
  .search{flex:0 1 344px;display:flex;align-items:center;gap:6px;background:#333;padding:0 14px 0 8px}
  .search input{flex:1;min-width:0;border:0;padding:0;background:none;font:14px/20px var(--ui);color:#fff}
  .search input::placeholder{color:#949494;opacity:1}
  .apps{display:flex;padding-left:2px}
  .apps .div{width:22px}
  .apps .div + button{margin-left:3px}
  .cur{background:#343d41}
  .run::after{content:"";position:absolute;left:5px;right:5px;bottom:0;height:2px;background:#76b9ed}
  .cur::after{left:0;right:0}
  .tray{display:flex;align-items:center;margin-left:auto}
  .two{text-align:center;font-size:12px;line-height:17px}
  .icons{display:flex;align-items:center;gap:9px;margin:0 22px 0 21px;font:13px/16px var(--ui);color:#fff}
  .icons svg:last-child{margin-left:4px}
  .note{width:36px;margin-left:14px}
  .edge{border-left:1px solid #59656b;width:4px;height:40px;margin-left:11px}
`, `
  <button class="start" aria-label="开始"><svg width="16" height="16"><path d="M0 2.300l6.500-.9v6.100H0zM7.300 1.300L16 0v7.500H7.300zM0 8.300h6.500v6.100L0 13.500zM7.300 8.300H16V16l-8.700-1.200z" fill="#fff"/></svg></button>
  <label class="search"><svg width="22" height="22" fill="none"><circle cx="11" cy="11" r="9" stroke="#f2f2f2" stroke-width="3"/></svg><input placeholder="在这里输入你要搜索的内容" aria-label="搜索">
    <svg width="12" height="18" fill="none"><rect x="3.500" y=".5" width="5" height="11" stroke="#aaa"/><path d="M.5 8v5.500h11V8M6 13.500V17M3 17h6" stroke="#aaa"/></svg></label>
  <div class="apps">
    <button aria-label="浏览器"><svg width="22" height="22" fill="#e4e4e4"><path d="M11 11C5 12 1 9 1 5c0-4 6-6 9-3 2 2 1 6 1 9z"/><path d="M11 11c-1-6 2-10 6-10 4 0 5 6 2 9-2 2-5 1-8 1zM11 11c6-1 10 2 10 6 0 4-6 5-9 2-2-2-1-5-1-8zM11 11c1 6-2 10-6 10-4 0-5-6-2-9 2-2 5-1 8-1z"/><path d="M11 11C9 8 6 8 3 9M11 11c3-2 3-5 2-8M11 11c2 3 5 3 8 2M11 11c-3 2-3 5-2 8" stroke="#020c11" fill="none"/></svg></button>
    <button aria-label="应用"><svg width="20" height="20" fill="none" stroke="#c4c8ca" stroke-width="1.300"><path d="M17 3c-7-3-15 0-15 7s8 10 13 7c5-4 1-10-4-9-4 1-4 6 0 6 3 0 3-3 1-3"/><path d="M19 2C14 5 8 4 6 8c-2 3-1 6 1 8"/></svg></button>
    <button class="div" aria-hidden="true"><svg width="4" height="16"><path d="M0 0h1v16H0zM3 0h1v16H3z" fill="#4a5257"/></svg></button>
    <button aria-label="Edge"><svg width="20" height="21" fill="none"><path d="M1 9C2 3 6 .5 10.500.5 16 .5 19.500 5 19.500 9.500v3H7c0 4 6 5 11 2.500V19C12 22 3 21 3 13c0-3 2-5.500 4.500-6.500C6.500 8 6.500 9 6.500 9h7C13.500 3 5 4 1 9z" fill="#1478d8"/></svg></button>
    <button aria-label="应用商店"><svg width="22" height="24" fill="none"><path d="M1 7l20-1.500V22L4 24l-3-1z" fill="#fff"/><path d="M6.500 7c0-7 8-8 8.500-1" stroke="#fff" stroke-width="1.500"/><path d="M6 11l4-.5v4H6zM11 10.300l5-.6v4.800h-5zM6 15.500h4v4L6 19zM11 15.500h5v5l-5-.8z" fill="#020c11"/></svg></button>
    <button aria-label="文件资源管理器"><svg width="22" height="20" fill="none"><path d="M0 1h8l2 2h12v16H0z" fill="#f8d878"/><path d="M0 5h22v14H0z" fill="#fce9a4"/><path d="M4 19v-7h14v7h-4v-3H8v3z" fill="#35a4dc"/></svg></button>
    <button class="cur run" aria-label="GGJ2013"><svg width="24" height="24" fill="none"><rect width="24" height="24" rx="5" fill="#0b95f4"/><path d="M12 20V7c0-3 4-3 4-1M12 12h5c3 0 3-3 1-4M12 12H7c-3 0-3 4-1 4M12 17c0 3-4 3-4 1" stroke="#fff" stroke-width="2"/></svg></button>
    <button class="run" aria-label="360浏览器"><svg width="24" height="24" fill="none"><circle cx="12" cy="12.500" r="9.500" fill="#3fae2e"/><path d="M6 13h11c0-7-10-7-11 0s8 7 11 3" stroke="#fff" stroke-width="2.800"/><path d="M2 17C0 22 14 14 22 2c0-2-4-1-7 1" stroke="#b8e050" stroke-width="1.800"/></svg></button>
    <button class="run" aria-label="算量"><svg width="24" height="24" fill="none"><path d="M0 0h12v12H0z" fill="#8cc63a"/><path d="M12 0h12v12H12z" fill="#f7c318"/><path d="M0 12h12v12H0z" fill="#e4572c"/><path d="M12 12h12v12H12z" fill="#189ccc"/><path d="M5 4v17h14V4M5 8h14M8 4v4M16 4v4M8 12h8M8 15h8M8 18h8" stroke="#fff" stroke-width="1.600"/></svg></button>
    <button class="run" aria-label="笔记"><svg width="24" height="24" fill="none"><rect width="24" height="24" rx="2" fill="#f39c1c"/><path d="M2 6l14-2 3 16-15 1z" fill="#fff8e4"/><path d="M5 10h6M5 13h5M6 16h8" stroke="#a07840" stroke-width="1.300"/><path d="M10 15L20 1l2 2-9 13z" fill="#b03c18"/></svg></button>
  </div>
  <div class="tray">
    <div class="two">52%<br>CPU使用</div>
    <div class="icons">
      <svg width="12" height="7" fill="none"><path d="M.5 6.500L6 1l5.500 5.500" stroke="#fff" stroke-width="1.200"/></svg>
      <svg width="16" height="11" fill="none"><path d="M4.500 3.500h10v6h-10z" stroke="#fff"/><path d="M6 5h7v3H6zM15 5h1v3h-1z" fill="#fff"/><path d="M0 3h5M1.500 1v2M3.500 1v2M2.500 3v5h2" stroke="#fff"/></svg>
      <svg width="14" height="13" fill="none"><path d="M1 12C1 6 6 1 12 1M4 12c0-4 4-8 8-8M7 12c0-2 3-5 5-5" stroke="#ddd" stroke-width="1.200"/><path d="M10 10h3v3h-3z" fill="#fff"/></svg>
      <svg width="16" height="13" fill="none"><path d="M.5 4.500H3l3-3v10l-3-3H.5z" stroke="#fff"/><path d="M8.500 4c1 1 1 4 0 5M11 2.500c2 2 2 6 0 8M13.500 1c3 3 3 8 0 11" stroke="#ccc"/></svg>
      <span>中</span>
      <svg width="17" height="17" viewBox="0 0 17 17" fill="none"><path d="M0 3l15-2.500 2 13L3 16.500z" fill="#ee4a1c"/><path d="M12.500 5c-3-2-7-1-6.500 1.300s6.500 1 6.500 3.200-5 3-7 1.500" stroke="#fff" stroke-width="2"/></svg>
    </div>
    <div class="two">19:27<br>2017/6/6</div>
    <button class="note" aria-label="通知"><svg width="25" height="24" fill="none"><path d="M1 1h16v12H8l-3 4v-4H1z" fill="#fff"/><path d="M4 4.500h10M4 7.500h10M4 10.500h6" stroke="#020c11"/><circle cx="16" cy="15.500" r="8" fill="#3b4448" stroke="#7b8488"/><text x="16" y="20" text-anchor="middle" font-family="Open Sans" font-weight="bold" font-size="12" fill="#fff">2</text></svg></button>
    <div class="edge"></div>
  </div>`);

/* ---- red review marks laid over the window ---- */
define('mark-layer', `
  :host{position:absolute;inset:0;pointer-events:none;overflow:hidden;color:#f00;font:500 23px/28px "Noto Sans CJK SC",sans-serif}
  svg{position:absolute;inset:0;width:100%;height:100%}
  p{position:absolute;margin:0;white-space:nowrap}
  b{font-family:"Liberation Sans",sans-serif;font-size:21px}
`, `
  <svg fill="none" stroke="#f00">
    <path d="M813.500 257.500h91v35h-91zM824.500 308.500h95v27h-95z" stroke-width="3"/>
    <path d="M978 194l-66 50M1025 234l-88 67M540 390l16 15 57-43" stroke-width="2.500"/>
    <path d="M907 248l4-10 2 4 5 3zM931 305l4-10 2 4 5 3z" fill="#f00" stroke-width="2"/>
  </svg>
  <p style="left:980px;top:169px">按照图纸要求设置</p>
  <p style="left:1023px;top:219px">按照图纸设置</p>
  <p style="left:957px;top:308px">附加箍筋和梁箍筋直径一致输入<b>6.</b></p>
  <p style="left:776px;top:362px">如果箍筋直径和梁箍筋不一致的时候输入<b>6c x</b></p>`);

define('speed-ball', `
  :host{position:absolute;left:1110px;top:-30px;width:48px;height:48px;border-radius:50%;background:#3cc95c;border:2px solid #d2d8d4;box-shadow:0 1px 4px #0008;box-sizing:border-box;color:#fff;font:bold 12px/16px var(--ui);text-align:center;padding-top:27px}
`, '75');

/* ---- application window ---- */
define('ggj-app', `
  :host{display:flex;flex-direction:column;min-height:100vh;position:relative;overflow:hidden}
  .top{display:flex;height:30px;align-items:center;gap:2px;margin-bottom:2px}
  .top tool-strip{height:28px}
  .top tool-strip:nth-child(1){flex:0 0 151px;padding-left:5px;padding-right:0}
  .top tool-strip:nth-child(2){flex:0 0 549px;padding-left:4px;padding-right:0}
  .top tool-strip:nth-child(3){padding-left:4px}
  main{flex:1;display:grid;grid-template-columns:165px 1fr;gap:5px;margin-bottom:1px}
  .work{display:flex;flex-direction:column;min-width:0}
  tool-row{padding-left:1px;flex:none}
  cad-canvas{flex:1;min-height:480px;margin-right:1px}
  .shift{margin-left:626px;padding-right:2px}
  .blank{width:24px;height:24px;background:linear-gradient(90deg,#fff,#f4f4f4);margin:0 -6px 0 -4px}
  .snaps{padding-right:4px}
  hanger-dialog{position:absolute;left:373px;top:10px}
  ime-bar{position:absolute;left:867px;top:90px;box-sizing:border-box;width:186px;height:24px}
`, `
  <title-bar></title-bar>
  <menu-bar></menu-bar>
  <div class="top">
    <tool-strip><tool-button icon="file"></tool-button><tool-button icon="open" drop="icon"></tool-button><tool-button icon="save"></tool-button><tool-sep></tool-sep><tool-button icon="undo" drop="icon"></tool-button><tool-more></tool-more></tool-strip>
    <tool-strip><tool-button icon="define">定义</tool-button><tool-button icon="sigma">汇总计算</tool-button><tool-button icon="cloud">云检查</tool-button><tool-button icon="align">平齐板顶</tool-button><tool-button icon="find">查找图元</tool-button><tool-button icon="glasses">查看钢筋量</tool-button><tool-button icon="batch">批量选择</tool-button><tool-more></tool-more></tool-strip>
    <tool-strip grow><tool-combo icon="rect" name="视图" value="二维" style="width:61px"></tool-combo><tool-button icon="cube" drop>俯视</tool-button><tool-button icon="orbit">动态观察</tool-button><tool-button icon="local3d">局部三维</tool-button><tool-sep></tool-sep><tool-button icon="full">全屏</tool-button><tool-button icon="zoom" drop>缩放</tool-button><tool-button icon="pan" drop>平移</tool-button><tool-button icon="screenrot" drop="tight">屏幕旋转</tool-button><tool-sep></tool-sep><tool-button icon="floors">选择楼层</tool-button><tool-more></tool-more></tool-strip>
  </div>
  <main>
    <nav-panel></nav-panel>
    <div class="work">
      <tool-row><tool-strip class="shift"><tool-grip></tool-grip><tool-combo name="偏移方式" value="不偏移" style="width:58px"></tool-combo><offset-fields></offset-fields></tool-strip></tool-row>
      <tool-row><tool-strip><tool-grip></tool-grip><tool-button icon="brush">删除</tool-button><tool-sep></tool-sep><tool-button icon="copy">复制</tool-button><tool-button icon="mirror">镜像</tool-button><tool-sep></tool-sep><tool-button icon="move">移动</tool-button><tool-button icon="rotate">旋转</tool-button><tool-sep></tool-sep><tool-button icon="extend">延伸</tool-button><tool-button icon="trim">修剪</tool-button><tool-sep></tool-sep><tool-button icon="break">打断</tool-button><tool-button icon="join">合并</tool-button><tool-button icon="split" disabled>分割</tool-button><tool-sep></tool-sep><tool-button icon="alignto" drop="tight">对齐</tool-button><tool-button icon="offset">偏移</tool-button><tool-button icon="stretch">拉伸</tool-button><tool-sep></tool-sep><tool-button icon="grip" disabled>设置夹点</tool-button></tool-strip></tool-row>
      <tool-row><tool-strip><tool-grip></tool-grip><tool-combo name="楼层" value="首层" style="width:57px"></tool-combo><tool-combo name="构件类别" value="梁"></tool-combo><tool-combo name="构件类型" value="梁"></tool-combo><tool-combo name="构件" value="KL-6"></tool-combo><tool-combo name="分层" value="分层2"></tool-combo><tool-sep></tool-sep><tool-button icon="prop">属性</tool-button><tool-button icon="editbar">编辑钢筋</tool-button><tool-button icon="list">构件列表</tool-button><tool-button icon="pick">拾取构件</tool-button></tool-strip>
        <tool-strip><tool-grip></tool-grip><div class="blank"></div></tool-strip>
        <tool-strip><tool-grip></tool-grip><tool-button icon="twopt">两点</tool-button><tool-button icon="parallel">平行</tool-button><tool-button icon="ptangle" drop>点角</tool-button><tool-button icon="threept" drop>三点辅轴</tool-button><tool-button icon="brush">删除辅轴</tool-button><tool-button icon="dim" drop>尺寸标注</tool-button></tool-strip></tool-row>
      <tool-row style="height:29px"><tool-strip grow style="height:28px"><tool-grip></tool-grip><tool-button icon="cursor" on>选择</tool-button><drop-arrow></drop-arrow><tool-sep></tool-sep><tool-button icon="line">直线</tool-button><tool-button icon="ptlen">点加长度</tool-button><tool-button icon="arc" drop>三点画弧</tool-button><tool-combo name="画法" style="width:55px"></tool-combo><tool-button icon="rect">矩形</tool-button><tool-sep></tool-sep><tool-button icon="smart" drop="tight">智能布置</tool-button><tool-sep></tool-sep><tool-button icon="modify">修改梁段属性</tool-button><tool-button icon="insitu" drop>原位标注</tool-button><tool-button icon="respan" drop>重提梁跨</tool-button><tool-button icon="paint" drop>梁跨数据复制</tool-button><tool-button icon="identify">批量识别梁支座</tool-button><tool-button icon="apply">应用到同名梁</tool-button><tool-more></tool-more></tool-strip></tool-row>
      <cad-canvas><hanger-dialog role="dialog"></hanger-dialog></cad-canvas>
      <tool-row style="height:29px"><tool-strip class="snaps"><tool-grip></tool-grip><tool-button icon="ortho">正交</tool-button><tool-button icon="snap" on>对象捕捉</tool-button><tool-button icon="dyn" on>动态输入</tool-button></tool-strip><tool-strip><tool-grip></tool-grip><tool-button icon="cross">交点</tool-button><tool-button icon="perp" on>垂点</tool-button><tool-button icon="mid" on>中点</tool-button><tool-button icon="vertex">顶点</tool-button><tool-button icon="coord">坐标</tool-button></tool-strip></tool-row>
    </div>
  </main>
  <status-bar></status-bar>
  <task-bar></task-bar>
  <ime-bar></ime-bar>
  <speed-ball></speed-ball>
  <mark-layer></mark-layer>`);
</script>
</body>
</html>
